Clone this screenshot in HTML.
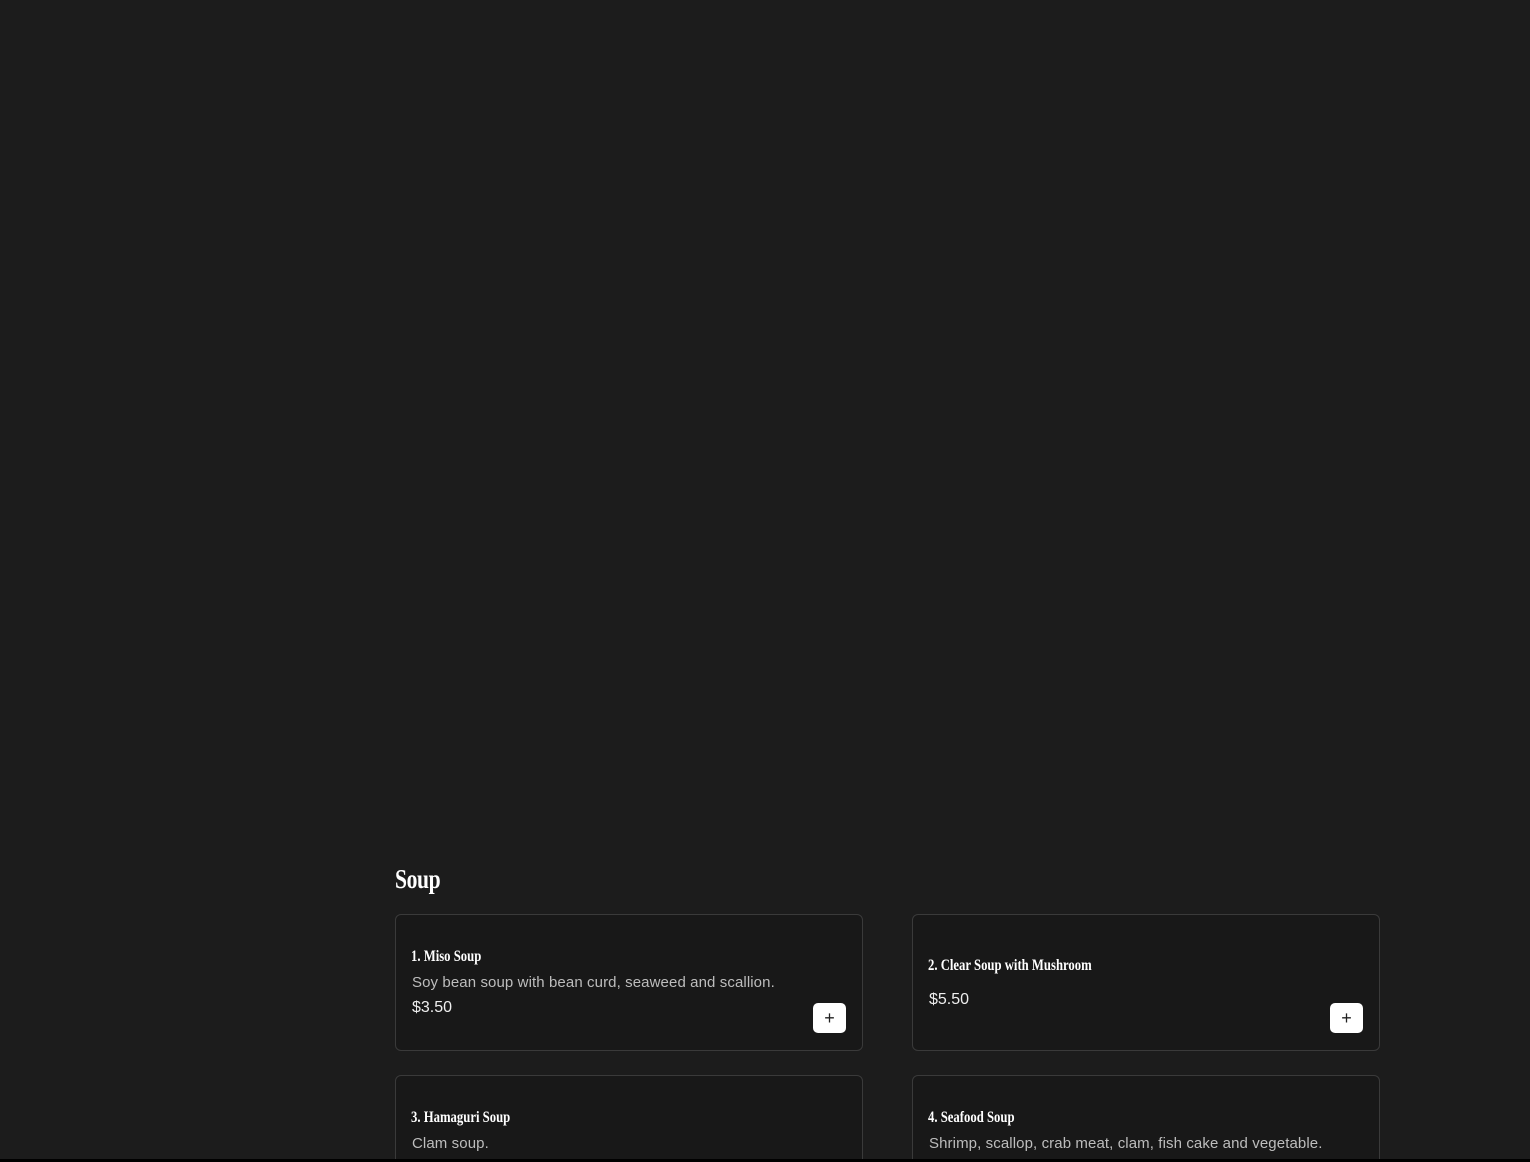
<!DOCTYPE html>
<html><head><meta charset="utf-8"><style>
html,body{margin:0;padding:0;width:1530px;height:1162px;overflow:hidden;}
body{background:#1c1c1c;position:relative;font-family:"Liberation Sans",sans-serif;}
.h{position:absolute;left:395px;top:864px;color:#fff;font-family:"Liberation Serif",serif;font-weight:bold;font-size:27px;transform:scaleX(0.8);transform-origin:left;letter-spacing:-0.5px;}
.card{position:absolute;width:468px;height:137px;background:#181818;border:1px solid #3a3a3a;border-radius:6px;box-sizing:border-box;}
.t{position:absolute;left:15px;color:#fff;font-family:"Liberation Serif",serif;font-weight:bold;font-size:15.5px;transform:scaleX(0.82);transform-origin:left;white-space:nowrap;}
.d{position:absolute;left:16px;color:#bdbdbd;font-size:15px;white-space:nowrap;letter-spacing:0.1px;}
.p{position:absolute;left:16px;color:#eee;font-size:16px;}
.b{position:absolute;right:16px;top:88px;width:33px;height:30px;background:#fff;border-radius:5px;color:#222;font-size:18px;text-align:center;line-height:30px;}
.bar{position:absolute;left:0;top:1159px;width:1530px;height:3px;background:#000;}
</style></head><body>
<div class="h">Soup</div>
<div class="card" style="left:395px;top:914px">
<div class="t" style="top:33px">1. Miso Soup</div>
<div class="d" style="top:59px">Soy bean soup with bean curd, seaweed and scallion.</div>
<div class="p" style="top:84px">$3.50</div>
<div class="b">+</div></div>
<div class="card" style="left:912px;top:914px">
<div class="t" style="top:42px">2. Clear Soup with Mushroom</div>
<div class="p" style="top:76px">$5.50</div>
<div class="b">+</div></div>
<div class="card" style="left:395px;top:1075px">
<div class="t" style="top:33px">3. Hamaguri Soup</div>
<div class="d" style="top:59px">Clam soup.</div></div>
<div class="card" style="left:912px;top:1075px">
<div class="t" style="top:33px">4. Seafood Soup</div>
<div class="d" style="top:59px">Shrimp, scallop, crab meat, clam, fish cake and vegetable.</div></div>
<div class="bar"></div>
</body></html>
